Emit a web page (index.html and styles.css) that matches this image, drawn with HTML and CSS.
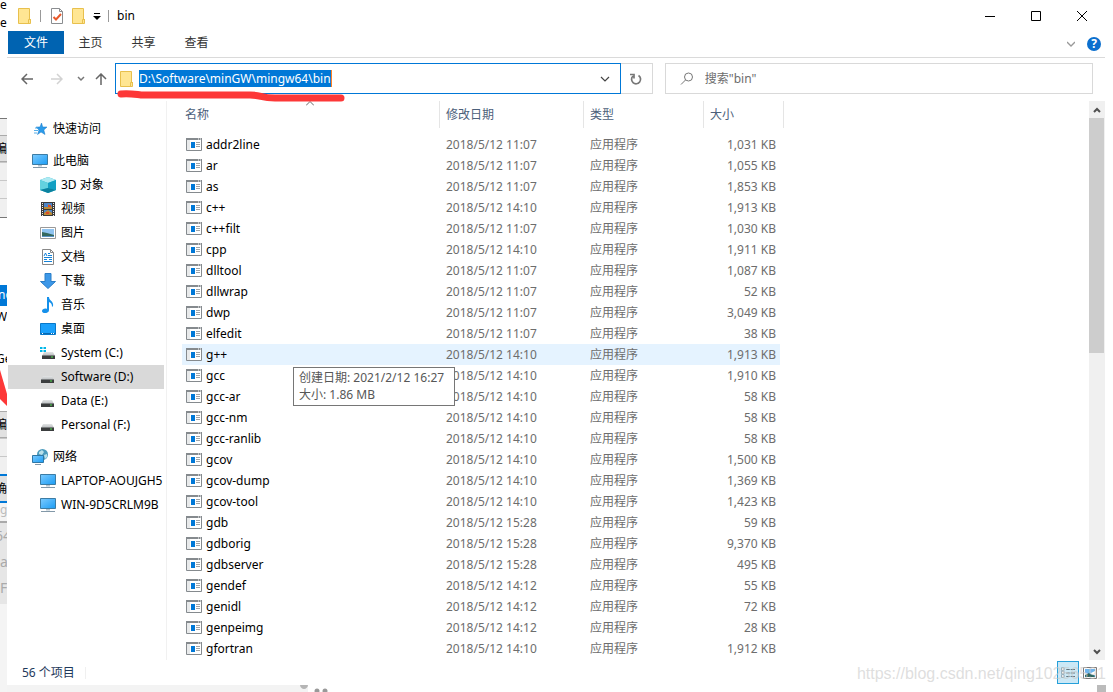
FILE: index.html
```html
<!DOCTYPE html>
<html lang="zh-CN">
<head>
<meta charset="utf-8">
<meta name="viewport" content="width=device-width, initial-scale=1">
<title>bin</title>
<link rel="stylesheet" href="styles.css">
</head>
<body>
<svg class="defs" aria-hidden="true">
  <defs>
    <linearGradient id="blue" x1="0" y1="0" x2="1" y2="1"><stop offset="0" stop-color="#7ccbff"/><stop offset="1" stop-color="#1b9cf4"/></linearGradient>
    <linearGradient id="drivetop" x1="0" y1="0" x2="0" y2="1"><stop offset="0" stop-color="#e3e5e6"/><stop offset="1" stop-color="#b5b9bb"/></linearGradient>
  </defs>
  <symbol id="folder" viewBox="0 0 16 16"><path d="M1.5.5h11v11h1v4H1.500z" fill="#ffe693" stroke="#e8c04d"/><path d="M11.500 15v-3.500h2.500" fill="none" stroke="#e8c04d"/></symbol>
  <symbol id="exe" viewBox="0 0 16 13"><path d="M.5.5h15v12H.5z" fill="#fff" stroke="#858a8e"/><path d="M0 0h16v2H0z" fill="#858a8e"/><path d="M12 1h1M14 1h1" stroke="#fff"/><path d="M1 2h3v10H1z" fill="#e8eaeb"/><path d="M5 4h4v6H5z" fill="#0078d7"/><path d="M10 4.500h4M10 6.500h4M10 8.500h4" stroke="#a0a4a7"/></symbol>
  <symbol id="pc" viewBox="0 0 16 16"><path d="M.5 1.500h15v10H.5z" fill="url(#blue)" stroke="#3c7ca4"/><path d="M6 12h4v1.500H6z" fill="#b5c3cd"/><path d="M1 14.500h14" stroke="#8298a8"/></symbol>
  <symbol id="drive" viewBox="0 0 16 16"><path d="M3 7h9l2 4H1z" fill="url(#drivetop)"/><path d="M1 10.500h13V14H1z" fill="#3b3d3e"/><path d="M10 12h2" stroke="#4ee34c"/></symbol>
</svg>
<div class="desktop">
  <aside class="behind" aria-hidden="true">
    <div class="b-top">e<br>e</div>
    <div class="b-panel b-r1"></div>
    <div class="b-button">编</div>
    <div class="b-panel b-r2"></div>
    <div class="b-panel b-r2"></div>
    <div class="b-panel b-r3"></div>
    <div class="b-space"></div>
    <div class="b-selected">no</div>
    <div class="b-text">W</div>
    <div class="b-text b-ge">Ge</div>
    <svg class="b-red" viewBox="0 0 7 43"><path d="M0 2L7 26V38L0 31z" fill="#fd3838"/></svg>
    <div class="b-button">编</div>
    <div class="b-panel b-r2"></div>
    <div class="b-panel b-r2"></div>
    <div class="b-button b-focus">确</div>
    <div class="b-mark">g</div>
    <div class="b-code">64<br>a<br>FF</div>
  </aside>

  <main class="window">
    <header class="titlebar">
      <svg class="ico"><use href="#folder"/></svg>
      <span class="rule"></span>
      <button class="bare" aria-label="属性"><svg class="ico" viewBox="0 0 16 16"><path d="M2.500.5h8l3 3v12h-11z" fill="#fff" stroke="#8a8d90"/><path d="M10.500.5v3h3" fill="none" stroke="#8a8d90"/><path d="M4.500 9l2.500 2.500L12 6" fill="none" stroke="#e8592b" stroke-width="2"/></svg></button>
      <button class="bare gap-s" aria-label="新建文件夹"><svg class="ico"><use href="#folder"/></svg></button>
      <button class="bare" aria-label="自定义"><svg class="tiny" viewBox="0 0 8 8"><path d="M1 1.500h6" stroke="#000"/><path d="M0 4h8L4 8z"/></svg></button>
      <span class="rule"></span>
      <h1>bin</h1>
      <div class="controls">
        <button class="bare" aria-label="最小化"><svg viewBox="0 0 10 10"><path d="M0 5.500h10" stroke="#000"/></svg></button>
        <button class="bare" aria-label="最大化"><svg viewBox="0 0 10 10"><path d="M.5.5h9v9h-9z" fill="none" stroke="#000"/></svg></button>
        <button class="bare" aria-label="关闭"><svg viewBox="0 0 10 10"><path d="M0 0l10 10M10 0L0 10" stroke="#000"/></svg></button>
      </div>
    </header>

    <nav class="tabs">
      <button class="tab file">文件</button>
      <button class="tab">主页</button>
      <button class="tab">共享</button>
      <button class="tab">查看</button>
      <div class="tabs-end">
        <button class="bare" aria-label="展开功能区"><svg class="tiny" viewBox="0 0 8 8"><path d="M0 2l4 4 4-4" fill="none" stroke="#999" stroke-width="1.300"/></svg></button>
        <button class="help" aria-label="帮助">?</button>
      </div>
    </nav>

    <div class="addressbar">
      <div class="arrows">
        <button class="bare" aria-label="后退"><svg viewBox="0 0 12 12"><path d="M12 6H1M6 1L1 6l5 5" fill="none" stroke="#666" stroke-width="1.500"/></svg></button>
        <button class="bare" aria-label="前进"><svg viewBox="0 0 12 12"><path d="M0 6h11M6 1l5 5-5 5" fill="none" stroke="#d2d2d2" stroke-width="1.500"/></svg></button>
        <button class="bare recent" aria-label="最近"><svg viewBox="0 0 8 8"><path d="M1 2l3 3 3-3" fill="none" stroke="#777" stroke-width="1.500"/></svg></button>
        <button class="bare" aria-label="上移"><svg viewBox="0 0 12 12"><path d="M6 12V1M1 6l5-5 5 5" fill="none" stroke="#666" stroke-width="1.500"/></svg></button>
      </div>
      <div class="path">
        <svg class="ico"><use href="#folder"/></svg>
        <span class="path-text">D:\Software\minGW\mingw64\bin</span>
        <button class="bare" aria-label="历史路径"><svg viewBox="0 0 10 10"><path d="M1 3l4 4 4-4" fill="none" stroke="#444" stroke-width="1.200"/></svg></button>
        <svg class="underline" viewBox="0 0 228 12"><path d="M4 4c7-1 12 0 20 1h109c12 0 10 3 25 3h66" fill="none" stroke="#fd3838" stroke-width="7" stroke-linecap="round" stroke-linejoin="round"/></svg>
      </div>
      <button class="refresh" aria-label="刷新"><svg viewBox="0 0 12 12"><path d="M8.500 2.500A4.500 4.500 0 1 1 3 3M0 1.500h4v4" fill="none" stroke="#777" stroke-width="1.700"/></svg></button>
      <label class="search"><svg viewBox="0 0 14 14"><circle cx="8.500" cy="5" r="4" fill="none" stroke="#777"/><path d="M5.500 8L1 12.500" stroke="#777"/></svg><input type="text" aria-label="搜索" placeholder="搜索&quot;bin&quot;"></label>
    </div>

    <div class="content">
      <nav class="tree">
        <a class="node root" href="#"><svg class="ico" viewBox="0 0 16 16"><path d="M9.500 2l1.200 4H15l-3.200 3 1.200 4.500-4-2.500-3.500 2.500L7 9 4 6h4z" fill="#2b9bea" stroke="#1679c8" stroke-width=".5"/><path d="M3 7h3M2 9.500h4M2 12h3" stroke="#56aee9"/></svg>快速访问</a>
        <a class="node root" href="#"><svg class="ico"><use href="#pc"/></svg>此电脑</a>
        <a class="node" href="#"><svg class="ico" viewBox="0 0 16 16"><path d="M0 3l8-3 8 3v10l-8 3-8-3z" fill="#2ab4cf"/><path d="M0 3l8-3 8 3-8 3z" fill="#aeeaf2"/><path d="M0 3l8 3v5l-8 2z" fill="#63d2df"/><path d="M8 6l8-3v10l-8-2z" fill="#12a0c3"/><path d="M0 13l8-2 8 2-8 3z" fill="#0b829f"/></svg>3D 对象</a>
        <a class="node" href="#"><svg class="ico" viewBox="0 0 16 16"><path d="M1 1h14v14H1z" fill="#3a3a3a"/><path d="M2.500 2v13M13.500 2v13" stroke="#eee" stroke-dasharray="1 1"/><path d="M4 2h8v6H4zM4 9h8v5H4z" fill="#4e86c8"/><path d="M4 6h4V3l4 3v2H4zM4 12l4-3 4 3v2H4z" fill="#bc8b35"/><path d="M8 4h3v2H8zM6 11h3v2H6z" fill="#de4c2b"/></svg>视频</a>
        <a class="node" href="#"><svg class="ico" viewBox="0 0 16 16"><path d="M.5 2.500h15v11H.5z" fill="#fff" stroke="#999"/><path d="M2 4h12v8H2z" fill="#8fc3f0"/><path d="M2 7l5 1 7 2v2H2z" fill="#34685e"/><path d="M2 11h12v1H2z" fill="#5791c4"/></svg>图片</a>
        <a class="node" href="#"><svg class="ico" viewBox="0 0 16 16"><path d="M2.500.5h8l3 3v12h-11z" fill="#fff" stroke="#888"/><path d="M10.500.5v3h3" fill="none" stroke="#888"/><path d="M4 7l1.500-3L7 7M8 4.500h2M8 6.500h4M4 8.500h8M4 10.500h3M9 10.500h3M4 12.500h8" stroke="#1583d8" fill="none"/></svg>文档</a>
        <a class="node" href="#"><svg class="ico" viewBox="0 0 16 16"><path d="M5 .5h6v8h4.500L8 15.500.5 8.500H5z" fill="#3d98e8" stroke="#2b7ec8"/></svg>下载</a>
        <a class="node" href="#"><svg class="ico" viewBox="0 0 16 16"><path d="M7 0h2c0 4 5 4 4 9l-1 1c0-3-1-4-3-5v8c0 4-7 4-7 1 0-2 3-3 5-2z" fill="#1590ea"/></svg>音乐</a>
        <a class="node" href="#"><svg class="ico" viewBox="0 0 16 16"><path d="M.5 2.500h15v11H.5z" fill="#1aa0fb" stroke="#0878c9"/><path d="M1 12.500h14" stroke="#0868b0"/><path d="M2 12.500h1M11 12.500h1M13 12.500h1" stroke="#fff"/></svg>桌面</a>
        <a class="node" href="#"><svg class="ico" viewBox="0 0 16 16"><use href="#drive" x="1" y="0" width="16" height="16"/><path d="M0 2h2.500v2H0zM3.500 2H6v2H3.500zM0 5h2.500v2H0zM3.500 5H6v2H3.500z" fill="#00b7e8"/></svg>System (C:)</a>
        <a class="node current" href="#"><svg class="ico"><use href="#drive"/></svg>Software (D:)</a>
        <a class="node" href="#"><svg class="ico"><use href="#drive"/></svg>Data (E:)</a>
        <a class="node" href="#"><svg class="ico"><use href="#drive"/></svg>Personal (F:)</a>
        <a class="node root network" href="#"><svg class="ico" viewBox="0 0 16 16"><circle cx="10.500" cy="5.500" r="5.500" fill="#4b9bbd"/><path d="M7 3l3-2 2 2-2 3-3-1zM12 6l3-1v3l-2 2z" fill="#b9e0ea"/><path d="M.5 6.500h11v7H.5z" fill="url(#blue)" stroke="#2e77a5"/><path d="M3 15.500h6" stroke="#8298a8"/></svg>网络</a>
        <a class="node" href="#"><svg class="ico"><use href="#pc"/></svg>LAPTOP-AOUJGH5</a>
        <a class="node" href="#"><svg class="ico"><use href="#pc"/></svg>WIN-9D5CRLM9B</a>
      </nav>

      <section class="list">
        <table>
          <colgroup><col class="c-name"><col class="c-date"><col class="c-type"><col class="c-size"></colgroup>
          <thead><tr><th><div>名称<svg class="sort" viewBox="0 0 8 5"><path d="M0 4.500l4-4 4 4" fill="none" stroke="#666"/></svg></div></th><th><div>修改日期</div></th><th><div>类型</div></th><th><div>大小</div></th></tr></thead>
          <tbody id="files"></tbody>
        </table>
        <div class="tooltip" role="tooltip">创建日期: 2021/2/12 16:27<br>大小: 1.86 MB</div>
      </section>

      <div class="scrollbar">
        <button class="bare" aria-label="向上滚动"><svg class="tiny" viewBox="0 0 8 8"><path d="M1 6l3-3 3 3" fill="none" stroke="#505050" stroke-width="2"/></svg></button>
        <div class="thumb"></div>
        <button class="bare" aria-label="向下滚动"><svg class="tiny" viewBox="0 0 8 8"><path d="M1 2l3 3 3-3" fill="none" stroke="#505050" stroke-width="2"/></svg></button>
      </div>
    </div>

    <footer class="status">
      <span class="count">56 个项目</span>
      <div class="views">
        <button class="view on" aria-label="详细信息"><svg viewBox="0 0 16 13"><path d="M.5.5h3v3h-3zM.5 4.500h3v3h-3zM.5 8.500h3v3h-3z" fill="#fff" stroke="#8aa0ad"/><path d="M6 2.500h4M11 2.500h5M6 6.500h4M11 6.500h5M6 10.500h4M11 10.500h5" stroke="#52656f"/></svg></button>
        <button class="view" aria-label="大图标"><svg viewBox="0 0 14 12"><path d="M.5.5h13v11H.5z" fill="#fff" stroke="#777"/><path d="M2 2h10v8H2z" fill="#6db4ed"/><path d="M2 6l4 1 6-3v4H2z" fill="#fff"/><path d="M2 8l4-2 6 3v1H2z" fill="#2d645e"/></svg></button>
      </div>
      <span class="watermark">https://blog.csdn.net/qing10256591</span>
    </footer>
    <svg class="bottom" viewBox="0 0 1106 7" preserveAspectRatio="xMinYMin slice" aria-hidden="true"><path d="M0 0h301v7H0z" fill="#f3f3f3"/><path d="M293 0h8c0 2-2 4-4 4s-4-2-4-4z" fill="#b5b5b5"/><circle cx="310" cy="6" r="2.500" fill="#999"/><circle cx="318" cy="6" r="2.500" fill="#999"/><path d="M1090 0h9v7h-9z" fill="#bbb"/></svg>
  </main>
</div>
<script src="files.js"></script>
</body>
</html>
```
FILE: styles.css
```css
* { box-sizing: border-box; }

body {
  margin: 0;
  background: #fff;
  color: #000;
  font: 12px/16px "Noto Sans", "Noto Sans CJK SC", sans-serif;
  overflow: hidden;
}

button, input { font: inherit; color: inherit; }
button { padding: 0; border: 0; background: none; }
svg { display: block; flex: none; }
.defs { position: absolute; width: 0; height: 0; }
.ico { width: 16px; height: 16px; }
.tiny { width: 8px; height: 8px; }
.bare { display: grid; place-items: center; }

.desktop { display: grid; grid-template-columns: 7px minmax(0, 1fr); height: 100vh; }

/* Sliver of the dialogs that lie behind the window */
.behind { display: flex; flex-direction: column; overflow: hidden; background: #f4f4f4; }
.behind > * { flex: none; overflow: hidden; }
.b-top { height: 122px; margin-top: -4px; line-height: 18px; background: #fff; }
.b-panel { background: #f0f0f0; border-top: 1px solid #c8c8c8; }
.b-r1 { height: 17px; border-color: #777; }
.b-r2 { height: 18px; }
.b-r3 { height: 20px; border-bottom: 1px solid #777; }
.b-button { height: 27px; background: #e1e1e1; border: 1px solid #aaa; border-width: 1px 0; line-height: 25px; text-indent: -5px; white-space: nowrap; }
.b-space { height: 67px; background: #fff; }
.b-selected { height: 21px; background: #0078d7; color: #fff; line-height: 20px; text-indent: -2px; }
.b-text { height: 42px; line-height: 22px; background: #fff; text-indent: -4px; }
.b-ge { height: 20px; }
.b-red { width: 7px; height: 43px; background: #fff; }
.b-focus { height: 29px; border: 2px solid #0078d7; border-width: 2px 0; }
.b-mark { height: 20px; border-bottom: 2px solid #aaa; color: #bbb; line-height: 14px; }
.b-code { height: 81px; background: #e6e6e6; color: #aaa; font-size: 14px; line-height: 26px; text-indent: -5px; }

.window { display: flex; flex-direction: column; min-width: 0; background: #fff; }

.titlebar { display: flex; align-items: center; height: 31px; padding-left: 10px; }
.titlebar .rule { width: 1px; height: 12px; margin: 0 8px 0 7px; background: #999; }
.titlebar .gap-s { margin: 0 6px; }
.titlebar .rule + h1 { margin: 0; font-size: 12px; font-weight: 400; }
.controls { display: flex; margin-left: auto; padding-right: 8px; }
.controls .bare { width: 46px; height: 30px; }
.controls svg { width: 10px; height: 10px; }

.tabs { display: flex; height: 27px; margin-right: 8px; padding-left: 1px; border-bottom: 1px solid #dadada; }
.tab { width: 53px; height: 24px; color: #333; }
.tab.file { width: 56px; height: 23px; background: #0063b1; color: #fff; }
.tabs-end { display: flex; align-items: center; gap: 12px; margin-left: auto; padding-right: 4px; }
.help { width: 14px; height: 14px; border-radius: 50%; background: #0b6fce; color: #fff; font-weight: 700; line-height: 14px; }

.addressbar { display: flex; align-items: center; height: 31px; margin: 5px 20px 0 0; }
.arrows { display: flex; flex: none; align-items: center; width: 108px; padding-left: 14px; gap: 18px; }
.arrows svg { width: 12px; height: 12px; }
.arrows .recent { margin: 0 -8px 0 -4px; }
.arrows .recent svg { width: 8px; height: 8px; }
.path { position: relative; display: flex; flex: 506 1 0; align-items: center; height: 31px; padding: 0 10px 0 3px; border: 1px solid #0078d7; }
.path-text { margin-left: 4px; border-right: 1px solid #ff8126; background: #0078d7; color: #fff; line-height: 17px; white-space: nowrap; }
.path .bare { margin-left: auto; }
.path .bare svg { width: 10px; height: 10px; }
.underline { position: absolute; left: 1px; top: 26px; width: 228px; height: 12px; z-index: 1; }
.refresh { display: grid; place-items: center; width: 32px; height: 31px; border: 1px solid #d9d9d9; border-left: 0; }
.refresh svg { width: 12px; height: 12px; }
.search { display: flex; flex: 425 1 0; align-items: center; gap: 11px; height: 31px; margin-left: 12px; padding-left: 14px; border: 1px solid #d9d9d9; }
.search svg { width: 14px; height: 14px; }
.search input { flex: 1; min-width: 0; padding: 0; border: 0; outline: 0; background: none; }
.search input::placeholder { color: #6d6d6d; opacity: 1; }

.content { display: flex; flex: 1; min-height: 0; margin: 7px 8px 0 0; }
.tree { width: 160px; flex: none; padding: 16px 2px 0 1px; border-right: 1px solid #f1f1f1; overflow: hidden; }
.node { display: flex; align-items: center; gap: 5px; height: 24px; padding-left: 32px; color: #000; text-decoration: none; white-space: nowrap; overflow: hidden; }
.node.root { padding-left: 24px; }
.node.root:first-child { margin-bottom: 8px; }
.node.network { margin-top: 8px; }
.node.current { background: #d9d9d9; }

.list { position: relative; flex: 1; min-width: 0; padding-left: 15px; overflow: hidden; }
table { width: 602px; border-collapse: collapse; table-layout: fixed; }
.c-name { width: 258px; }
.c-date { width: 144px; }
.c-type { width: 120px; }
.c-size { width: 80px; }
th { padding: 0 0 6px; text-align: left; font-weight: 400; color: #4c607a; }
th div { position: relative; height: 27px; padding-left: 6px; border-right: 1px solid #e5e5e5; line-height: 27px; }
th:first-child div { padding-left: 3px; }
.sort { position: absolute; left: 124px; top: 0; width: 8px; height: 5px; }
td { height: 21px; padding: 0 0 0 6px; color: #6d6d6d; white-space: nowrap; }
td:first-child { padding-left: 4px; }
td:last-child { padding: 0 8px 0 0; text-align: right; }
.name { display: flex; align-items: center; gap: 4px; color: #000; }
.name svg { width: 16px; height: 13px; }
.hot td { background: #e5f3ff; }
.hot td:last-child { background: linear-gradient(to left, #fff 4px, #e5f3ff 4px); }
.tooltip { position: absolute; left: 126px; top: 266px; padding: 1px 10px 2px 5px; border: 1px solid #767676; background: #fff; color: #575757; line-height: 17px; white-space: nowrap; }

.scrollbar { display: flex; flex-direction: column; width: 16px; background: #f0f0f0; }
.scrollbar .bare { height: 17px; }
.thumb { height: 235px; margin-right: 1px; margin-bottom: auto; background: #cdcdcd; }

.status { position: relative; display: flex; align-items: center; flex: none; height: 25px; padding: 0 12px 0 15px; color: #1e395b; }
.count { padding-right: 10px; border-right: 1px solid #f0f0f0; line-height: 12px; }
.views { display: flex; margin-left: auto; }
.view { display: grid; place-items: center; width: 22px; height: 23px; }
.view.on { border: 1px solid #26a0da; background: #cbe8f6; }
.view svg { width: 14px; height: 12px; }
.watermark { position: absolute; right: 7px; bottom: 1px; color: rgba(200, 200, 200, .6); font: 16px/20px "Liberation Sans", sans-serif; white-space: nowrap; }
.bottom { width: 100%; height: 7px; }
```
FILE: files.js
```js
const files = [
  ["addr2line", "11:07", "1,031"], ["ar", "11:07", "1,055"], ["as", "11:07", "1,853"],
  ["c++", "14:10", "1,913"], ["c++filt", "11:07", "1,030"], ["cpp", "14:10", "1,911"],
  ["dlltool", "11:07", "1,087"], ["dllwrap", "11:07", "52"], ["dwp", "11:07", "3,049"],
  ["elfedit", "11:07", "38"], ["g++", "14:10", "1,913"], ["gcc", "14:10", "1,910"],
  ["gcc-ar", "14:10", "58"], ["gcc-nm", "14:10", "58"], ["gcc-ranlib", "14:10", "58"],
  ["gcov", "14:10", "1,500"], ["gcov-dump", "14:10", "1,369"], ["gcov-tool", "14:10", "1,423"],
  ["gdb", "15:28", "59"], ["gdborig", "15:28", "9,370"], ["gdbserver", "15:28", "495"],
  ["gendef", "14:12", "55"], ["genidl", "14:12", "72"], ["genpeimg", "14:12", "28"],
  ["gfortran", "14:10", "1,912"]
];
document.getElementById("files").innerHTML = files.map(([name, time, size]) =>
  `<tr${name === "g++" ? ' class="hot"' : ""}><td><div class="name"><svg><use href="#exe"/></svg>${name}</div></td>` +
  `<td>2018/5/12 ${time}</td><td>应用程序</td><td>${size} KB</td></tr>`).join("");
```
